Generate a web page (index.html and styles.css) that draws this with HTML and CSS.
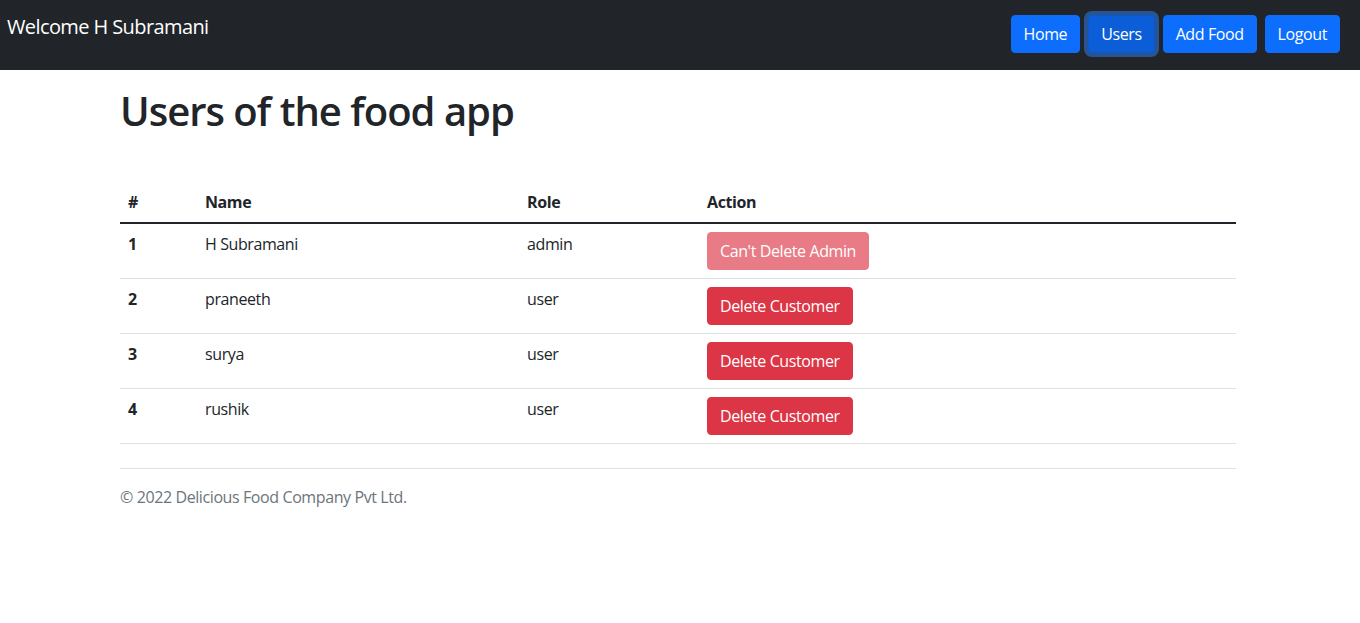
FILE: index.html
```html
<!DOCTYPE html>
<html lang="en">
<head>
<meta charset="utf-8">
<title>Users</title>
<link rel="stylesheet" href="styles.css">
</head>
<body>
<nav class="navbar">
  <span class="brand">Welcome H Subramani</span>
  <div class="nav-actions">
    <button class="btn btn-primary">Home</button>
    <button class="btn btn-primary active">Users</button>
    <button class="btn btn-primary">Add Food</button>
    <button class="btn btn-primary">Logout</button>
  </div>
</nav>
<main class="container">
  <h1 class="title">Users of the food app</h1>
  <table class="table">
    <thead>
      <tr><th class="c-num">#</th><th class="c-name">Name</th><th class="c-role">Role</th><th>Action</th></tr>
    </thead>
    <tbody>
      <tr><th>1</th><td>H Subramani</td><td>admin</td><td><button class="btn btn-danger" disabled>Can't Delete Admin</button></td></tr>
      <tr><th>2</th><td>praneeth</td><td>user</td><td><button class="btn btn-danger">Delete Customer</button></td></tr>
      <tr><th>3</th><td>surya</td><td>user</td><td><button class="btn btn-danger">Delete Customer</button></td></tr>
      <tr><th>4</th><td>rushik</td><td>user</td><td><button class="btn btn-danger">Delete Customer</button></td></tr>
    </tbody>
  </table>
  <hr class="divider">
  <footer class="footer">© 2022 Delicious Food Company Pvt Ltd.</footer>
</main>
</body>
</html>
```
FILE: styles.css
```css
* { box-sizing: border-box; }
body {
  margin: 0;
  font-family: "Open Sans", "Noto Sans", sans-serif;
  font-size: 16px;
  line-height: 1.5;
  letter-spacing: -0.025em;
  color: #212529;
  background: #fff;
}
.navbar {
  background: #212529;
  height: 70px;
  display: flex;
  justify-content: space-between;
  align-items: flex-start;
  padding: 0 20px 0 7px;
}
.brand {
  color: #fff;
  font-size: 20px;
  line-height: 30px;
  margin-top: 12px;
  letter-spacing: -0.03em;
}
.nav-actions {
  display: flex;
  gap: 8px;
  margin-top: 15px;
}
.btn {
  font-family: inherit;
  font-size: 16px;
  line-height: 24px;
  letter-spacing: inherit;
  padding: 6px 12px;
  border: 1px solid transparent;
  border-radius: 4px;
  color: #fff;
  cursor: pointer;
}
.btn-primary { background: #0d6efd; border-color: #0d6efd; }
.btn-primary.active {
  background: #0b5ed7;
  border-color: #0a58ca;
  box-shadow: 0 0 0 4px rgba(49, 132, 253, 0.5);
}
.btn-danger { background: #dc3545; border-color: #dc3545; }
.btn-danger:disabled { opacity: 0.65; cursor: default; }
.container {
  width: 1116px;
  margin-left: 120px;
}
.title {
  font-size: 40px;
  font-weight: 600;
  line-height: 48px;
  letter-spacing: -0.025em;
  margin: 17px 0 0 0;
}
.table {
  width: 100%;
  border-collapse: collapse;
  margin-top: 47px;
}
.table th, .table td {
  text-align: left;
  vertical-align: top;
  padding: 8px;
  border-bottom: 1px solid #dee2e6;
}
.table thead th { border-bottom: 2px solid #212529; }
.table th { font-weight: 700; }
.c-num { width: 77px; }
.c-name { width: 322px; }
.c-role { width: 180px; }
.divider {
  border: 0;
  border-top: 1px solid #dee2e6;
  margin: 24px 0 16px 0;
}
.footer { color: #6c757d; }
```
